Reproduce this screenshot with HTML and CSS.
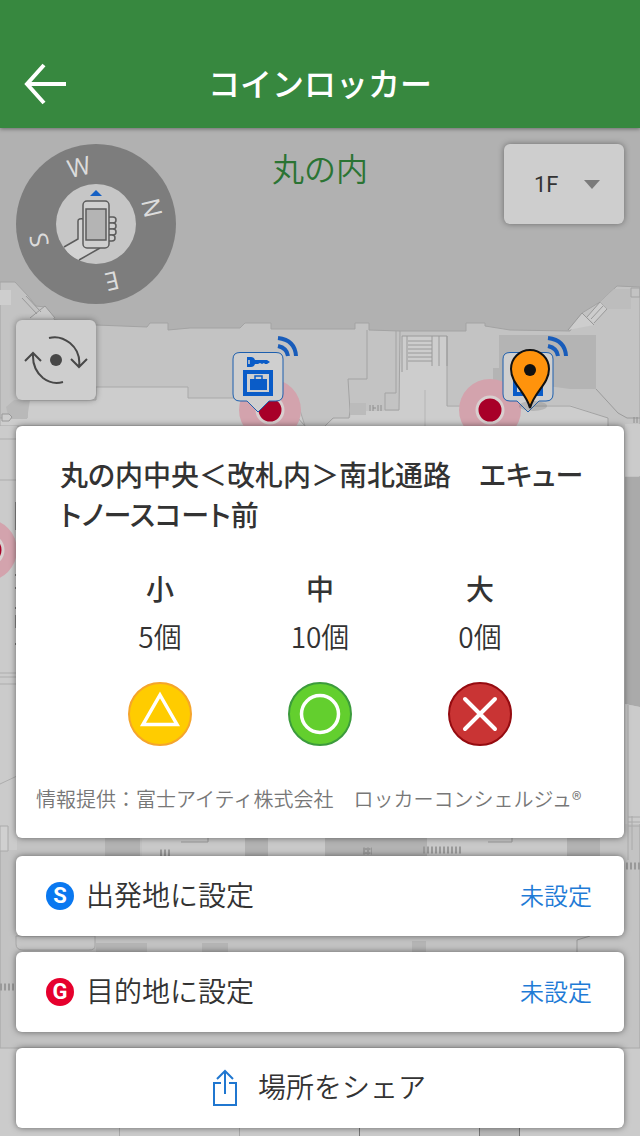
FILE: index.html
```html
<!DOCTYPE html>
<html lang="ja">
<head>
  <meta charset="UTF-8">
  <meta name="viewport" content="width=device-width, initial-scale=1.0">
  <title>コインロッカー</title>
  <link rel="stylesheet" href="styles.css">
</head>
<body>
  <header class="header">
    <button class="back" aria-label="戻る">
      <svg width="44" height="42" viewBox="0 0 44 42" fill="none" stroke="#fff" stroke-width="4">
        <path d="M22 2 5 21 22 40M4 21H44"/>
      </svg>
    </button>
    <h1 class="title">コインロッカー</h1>
  </header>

  <main class="screen">
    <!-- フロアマップ -->
    <svg class="map" viewBox="0 128 640 1008" preserveAspectRatio="xMidYMin slice" aria-hidden="true">
      <rect y="128" width="640" height="1008" fill="#b1b1b1"/>
      <path d="M0 282H15L28 296 36 306 45 307 55 320 96 325 147 327 150 323H168V330L190 328 240 328 245 323H271V329H355V323H369V330L400 331H466V323H485V326L510 330 570 331 582 313 600 302 617 286 640 287V1136H0Z" fill="#c3c3c3" stroke="#a3a3a3"/>
      <path d="M0 290H11V305H0Z" fill="#cecece"/>
      <path d="M30 318 45 306 55 318M22 298 37 314M26 296 41 312" fill="#c9c9c9" stroke="#999"/>
      <path d="M568 330 582 313 594 325M587 317 600 302 607 309 594 323M591 319 603 306" fill="#cdcdcd" stroke="#999"/>
      <path d="M600 302 614 289H631V309H607Z" fill="#bdbdbd"/>
      <path d="M631 288H640V297H631Z" fill="none" stroke="#a3a3a3"/>
      <path d="M96 387H188V398H296L305 426H0V418H27V400H96Z" fill="#cdcdcd" stroke="#a9a9a9"/>
      <path d="M6 407 14 400H30L27 419H9Z" fill="#b9b9b9"/>
      <path d="M2 414H9L12 417 9 421H2Z" fill="#cdcdcd" stroke="#999"/>
      <path d="M401 336H447V405H570L608 418V426H325L335 418H350L352 411H399Z" fill="#cdcdcd"/>
      <path d="M367 330V379H348L350 411 349 418H333L325 426M396 331V393H385V410H399L400 331M447 336V406H570L608 418V426M296 398V416L305 426" fill="none" stroke="#a3a3a3"/>
      <path d="M402 336V372M407 336V370M432 336V366M439 336V366M447 336V366M402 336H447" fill="none" stroke="#9a9a9a"/>
      <path d="M408 341H432M408 345H432M408 349H432M408 353H432M408 357H432M408 361H432" stroke="#9a9a9a"/>
      <path d="M425 390V426" stroke="#b5b5b5"/>
      <path d="M499 335H596V389H570L548 386H493V368H499Z" fill="#b4b4b4"/>
      <path d="M596 389 618 413 627 418H640" fill="none" stroke="#9b9b9b"/>
      <path d="M350 403H366V415H350Z" fill="#bbb"/>
      <path d="M370 405V411M373 405V411M373 408H376M378 405V411M381 405V411M634 417V423M637 417V423" stroke="#8e8e8e"/>
      <path d="M0 426H17V850H0Z" fill="#cbcbcb"/>
      <path d="M0 439H17M0 480H17M0 673H17M0 677H17M0 684H17M0 784 17 776" stroke="#adadad"/>
      <path d="M16 502V530M16 615V628" stroke="#888" stroke-width="2"/>
      <path d="M15 548H17M15 575H17M15 588H17M15 608H17M15 644H17" stroke="#777" stroke-width="2"/>
      <path d="M0 826H8V851H0Z" fill="#d0d0d0" stroke="#aaa"/>
      <path d="M625 424H640V476H625Z" fill="#cbcbcb"/>
      <path d="M625 477H640V707L625 704Z" fill="#aaa"/>
      <path d="M625 704 640 707V824H625Z" fill="#cbcbcb"/>
      <path d="M628 705V860M632 816V850M628 817H640M628 822H640M628 826H640" stroke="#aaa" fill="none"/>
      <path d="M105 838H140V856H105ZM325 838H427V856H325ZM245 838H268V856H245ZM567 838H600V856H567Z" fill="#b3b3b3"/>
      <path d="M142 838H245V856H142ZM268 838H325V856H268ZM427 838H567V856H427Z" fill="#c9c9c9"/>
      <path d="M181 842H208V838M488 842H512V838" fill="none" stroke="#999"/>
      <path d="M160 853H170M363 851H372M367 848V856M423 850H462M626 866H640M0 987H17" fill="none" stroke="#999" stroke-width="7" stroke-dasharray="2 2"/>
      <path d="M16 936H95V946Q95 950 89 950H23Q16 950 16 944Z" fill="#c6c6c6" stroke="#a6a6a6"/>
      <path d="M96 943H147V952H96ZM202 943H228V952H202ZM412 941H426V952H412Z" fill="#b5b5b5"/>
      <path d="M577 952V940L590 936" fill="none" stroke="#999"/>
      <path d="M0 1048H640V1136H0Z" fill="#cbcbcb"/>
      <path d="M0 1048H640M119.500 1128V1136M239.500 1128V1136" stroke="#aaa"/>
      <path d="M480 1128H520V1136H480Z" fill="#b8b8b8"/>
      <path d="M359.500 1128V1136M479.500 1128V1136M519.500 1128V1136" stroke="#777"/>

      <g fill="#d3a3ad">
        <circle cx="270" cy="410" r="31"/>
        <circle cx="490" cy="410" r="31"/>
        <circle cx="-14" cy="550" r="31"/>
      </g>
      <g fill="#a80028" stroke="#d9cfcf" stroke-width="3">
        <circle cx="270" cy="410" r="13"/>
        <circle cx="490" cy="410" r="13"/>
        <circle cx="-12" cy="550" r="15"/>
      </g>

      <defs>
        <g id="locker">
          <path d="M7 .5H43Q50 .5 50 7V42Q50 49 43 49H36L25 60 14 49H7Q0 49 0 42V7Q0 .5 7 .5Z" fill="#cfcfcf" stroke="#1d5fae"/>
          <path d="M14 5H18Q21 5 22 8H34L37 10 34 12H32L31 11 29 12 27 11 25 12H22Q21 15 18 15H14Z" fill="#0a5cc8"/>
          <path d="M16 8V12" stroke="#cfcfcf" stroke-width="1.500"/>
          <path d="M12 20H38V42H12Z" fill="#cfcfcf" stroke="#0a5cc8" stroke-width="4"/>
          <path d="M17 27H34V38H17Z" fill="#0a5cc8"/>
          <path d="M22 27V24H29V27" fill="none" stroke="#0a5cc8" stroke-width="1.500"/>
          <path d="M45 -14Q62 -12 63 4M45 -6Q54 -4 55 4" fill="none" stroke="#185cba" stroke-width="4"/>
        </g>
      </defs>
      <use href="#locker" x="233" y="352"/>
      <use href="#locker" x="503" y="352"/>
      <ellipse cx="533" cy="406" rx="14" ry="5" fill="#555" opacity=".2"/>
      <path d="M530 408C526 392 511 384 511 369A19 19 0 0 1 549 369C549 384 534 392 530 408Z" fill="#ff930c" stroke="#111" stroke-width="2"/>
      <circle cx="530" cy="370" r="6" fill="#111"/>
    </svg>

    <div class="toolbar">
      <div class="tools">
        <svg class="compass" width="160" height="160" viewBox="0 0 160 160" role="img" aria-label="方位">
          <circle cx="80" cy="80" r="80" fill="#7d7d7d"/>
          <circle cx="80" cy="80" r="40" fill="#c6c6c6"/>
          <g class="compass-letters">
            <text transform="translate(63 23) rotate(-13)" y="9">W</text>
            <text transform="translate(136 64) rotate(77)" y="9">N</text>
            <text transform="translate(96 137) rotate(167)" y="9">E</text>
            <text transform="translate(23 96) rotate(257)" y="9">S</text>
          </g>
          <path d="M74 52 80 46 86 52Z" fill="#1560c4"/>
          <path d="M48 103 62 95V75H68V95L84 104 63 116Q53 112 48 103Z" fill="#d2d2d2"/>
          <path d="M48 103 62 95V77Q62 74 68 75M84 104 63 116" fill="none" stroke="#5c5c5c" stroke-width="1.500"/>
          <g fill="#cfcfcf" stroke="#5c5c5c" stroke-width="1.500">
            <rect x="91" y="73" width="9" height="6" rx="3"/>
            <rect x="91" y="79" width="9" height="6" rx="3"/>
            <rect x="91" y="85" width="9" height="6" rx="3"/>
            <rect x="90" y="91" width="9" height="6" rx="3"/>
            <rect x="67" y="57" width="26" height="47" rx="4"/>
            <rect x="70" y="65" width="20" height="31" fill="#b4b4b4"/>
          </g>
        </svg>
        <button class="tool rotate" aria-label="回転">
          <svg width="64" height="52" viewBox="0 0 64 52" fill="none" stroke="#484848" stroke-width="2">
            <path d="M25 4Q36 1 46 9Q57 18 55 33M47 25 55 33 63 25"/>
            <path d="M39 48Q28 51 19 44Q8 35 9 19M1 27 9 19 17 27"/>
            <circle cx="32" cy="26" r="6" fill="#484848" stroke="none"/>
          </svg>
        </button>
      </div>
      <h2 class="area">丸の内</h2>
      <div class="floor">
        <select class="tool floor-select" aria-label="階">
          <option>1F</option>
        </select>
        <svg class="floor-arrow" width="16" height="9" viewBox="0 0 16 9"><path d="M0 0H16L8 9Z" fill="#7b7b7b"/></svg>
      </div>
    </div>

    <div class="sheet">
      <section class="card info">
        <h2 class="name">丸の内中央＜改札内＞南北通路　エキュートノースコート前</h2>
        <table class="sizes">
          <thead>
            <tr>
              <th>小</th>
              <th>中</th>
              <th>大</th>
            </tr>
          </thead>
          <tbody>
            <tr>
              <td>5個</td>
              <td>10個</td>
              <td>0個</td>
            </tr>
            <tr>
              <td>
                <svg class="status" viewBox="0 0 64 64" role="img" aria-label="残りわずか">
                  <circle cx="32" cy="32" r="31" fill="#fc0" stroke="#f5a52b" stroke-width="2"/>
                  <path d="M32 13 49 42.500H15Z" fill="none" stroke="#fff" stroke-width="3.500"/>
                </svg>
              </td>
              <td>
                <svg class="status" viewBox="0 0 64 64" role="img" aria-label="空きあり">
                  <circle cx="32" cy="32" r="31" fill="#63cf2e" stroke="#3c9b3c" stroke-width="2"/>
                  <circle cx="32" cy="32" r="18.500" fill="none" stroke="#fff" stroke-width="3.500"/>
                </svg>
              </td>
              <td>
                <svg class="status" viewBox="0 0 64 64" role="img" aria-label="空きなし">
                  <circle cx="32" cy="32" r="31" fill="#c93434" stroke="#950b10" stroke-width="2"/>
                  <path d="M17 17 47 47M47 17 17 47" stroke="#fff" stroke-width="4" stroke-linecap="round"/>
                </svg>
              </td>
            </tr>
          </tbody>
        </table>
        <p class="provider">情報提供：富士アイティ株式会社　ロッカーコンシェルジュ®</p>
      </section>

      <div class="actions">
        <button class="card action">
          <span class="badge start">S</span>
          <span class="label">出発地に設定</span>
          <span class="label state">未設定</span>
        </button>
        <button class="card action">
          <span class="badge goal">G</span>
          <span class="label">目的地に設定</span>
          <span class="label state">未設定</span>
        </button>
        <button class="card action share">
          <svg width="26" height="38" viewBox="0 0 26 38" fill="none" stroke="#2077d0" stroke-width="2">
            <path d="M9 14H2V36H24V14H17M13 25V2M5 10 13 2 21 10"/>
          </svg>
          <span class="label">場所をシェア</span>
        </button>
      </div>
    </div>
  </main>
</body>
</html>
```

FILE: styles.css
```css
* {
  box-sizing: border-box;
}

body {
  margin: 0;
  min-height: 100vh;
  display: flex;
  flex-direction: column;
  font-family: "Noto Sans CJK JP", sans-serif;
  font-size: 28px;
  font-weight: 350;
  color: #333;
}

button,
select {
  font: inherit;
  color: inherit;
  border: none;
  cursor: pointer;
}

h1,
h2,
p {
  margin: 0;
}

.header {
  position: relative;
  z-index: 1;
  display: grid;
  grid-template-columns: 1fr auto 1fr;
  align-items: center;
  height: 128px;
  padding: 40px 22px 0;
  background-color: #37883f;
  box-shadow: 0 1px 4px rgba(0, 0, 0, 0.4);
}

.back {
  justify-self: start;
  display: flex;
  padding: 0;
  background: none;
}

.title {
  padding-bottom: 4px;
  color: #fff;
  font-size: 32px;
  font-weight: 500;
  line-height: 40px;
}

.screen {
  position: relative;
  flex: 1;
  display: flex;
  flex-direction: column;
  justify-content: space-between;
}

/* マップは操作パネルの下に敷く */
.map {
  position: absolute;
  top: 0;
  left: 0;
  width: 100%;
  height: 100%;
}

.toolbar {
  position: relative;
  display: grid;
  grid-template-columns: 1fr auto 1fr;
  align-items: start;
  padding: 16px;
}

.tools {
  display: flex;
  flex-direction: column;
  align-items: flex-start;
  gap: 16px;
}

.compass {
  display: block;
}

.compass-letters {
  fill: #dcdcdc;
  font-family: "Open Sans", sans-serif;
  font-size: 25px;
  font-weight: 400;
  text-anchor: middle;
}

.tool {
  height: 80px;
  background-color: #cecece;
  border-radius: 6px;
  box-shadow: 0 0 6px rgba(0, 0, 0, 0.4);
}

.rotate {
  width: 80px;
  display: flex;
  align-items: center;
  justify-content: center;
  padding: 0;
}

.area {
  color: #2b7433;
  font-size: 32px;
  font-weight: 350;
  line-height: 46px;
}

.floor {
  justify-self: end;
  position: relative;
}

.floor-select {
  display: block;
  width: 120px;
  padding: 0 30px;
  appearance: none;
  font-family: Roboto, sans-serif;
  font-size: 22px;
  font-weight: 400;
}

.floor-arrow {
  position: absolute;
  right: 24px;
  top: 36px;
  pointer-events: none;
}

.sheet {
  position: relative;
  display: flex;
  flex-direction: column;
  gap: 18px;
  padding: 0 16px 8px;
}

.actions {
  display: flex;
  flex-direction: column;
  gap: 16px;
}

.card {
  background-color: #fff;
  border-radius: 6px;
  box-shadow: 0 0 6px rgba(0, 0, 0, 0.5);
}

.info {
  padding: 28px 20px 26px;
}

.name {
  padding: 0 20px 0 24px;
  font-size: 28px;
  font-weight: 500;
  line-height: 40px;
  font-feature-settings: "palt";
}

.sizes {
  width: calc(100% - 88px);
  margin: 30px auto 40px;
  table-layout: fixed;
  border-collapse: collapse;
  text-align: center;
  line-height: 48px;
}

.sizes th,
.sizes td {
  padding: 0;
}

.sizes th {
  font-weight: 500;
}

.status {
  display: block;
  width: 64px;
  margin: 22px auto 0;
}

.provider {
  font-size: 20px;
  line-height: 26px;
  color: #777;
}

.action {
  display: flex;
  align-items: center;
  gap: 12px;
  width: 100%;
  height: 80px;
  padding: 0 32px 0 30px;
}

.label {
  padding-bottom: 4px;
}

.badge {
  width: 28px;
  height: 28px;
  border-radius: 50%;
  color: #fff;
  font-family: Roboto, sans-serif;
  font-size: 22px;
  font-weight: 700;
  line-height: 28px;
  text-align: center;
}

.start {
  background-color: #0a78f0;
}

.goal {
  background-color: #e6002d;
}

.state {
  margin-left: auto;
  color: #1f7bd6;
  font-size: 24px;
}

.share {
  justify-content: center;
  gap: 20px;
}
```
